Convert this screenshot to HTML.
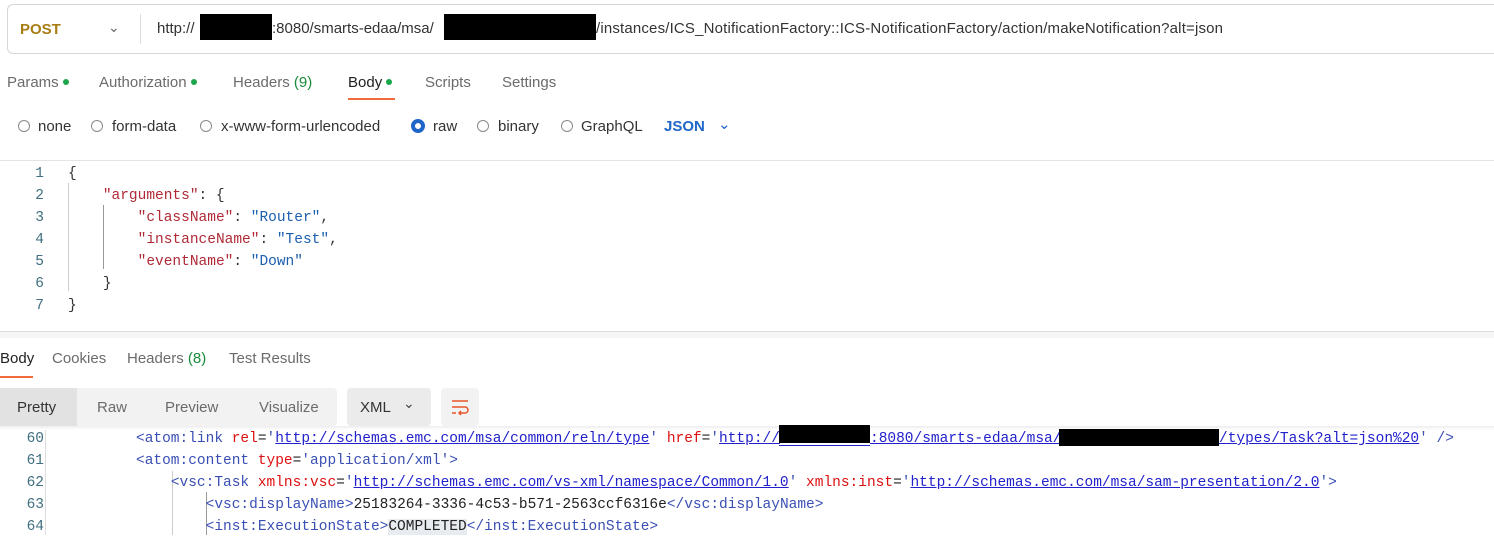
<!DOCTYPE html>
<html><head><meta charset="utf-8"><style>
body{margin:0;width:1494px;height:535px;overflow:hidden;background:#fff;font-family:"Liberation Sans",sans-serif;position:relative;color:#212121}
.a{position:absolute;white-space:nowrap}
.mono{font-family:"Liberation Mono",monospace;font-size:14.5px}
.blk{position:absolute;background:#000}
.tab{font-size:15px;color:#6b6b6b}
.dot{display:inline-block;width:6px;height:6px;border-radius:50%;background:#1aa64a;margin-left:4px;vertical-align:2px}
.rad{position:absolute;width:12px;height:12px;border:1px solid #888;border-radius:50%;box-sizing:border-box}
.rt{position:absolute;font-size:15px;color:#333;white-space:nowrap}
.ln{color:#3f6f80;font-family:"Liberation Mono",monospace;font-size:14.5px;text-align:right;width:44px}
.k{color:#b02a37}.s{color:#1b5fae}.p{color:#333}
.t{color:#3a4fb4}.at{color:#d11}.u{color:#2222cc;text-decoration:underline}
.url{position:absolute;top:20px;font-size:15px;color:#333;white-space:nowrap}
</style></head><body>
<div class="a" style="left:7px;top:4px;width:1500px;height:48px;border:1px solid #d6d6d6;border-radius:6px"></div>
<div class="a" style="left:20px;top:21px;font-size:15px;font-weight:bold;color:#a87d14">POST</div>
<div class="a" style="left:108px;top:19px;font-size:14px;color:#666">&#8964;</div>
<div class="a" style="left:140px;top:14px;width:1px;height:30px;background:#ddd"></div>
<div class="url" style="left:157px">http://</div>
<div class="url" style="left:272px">:8080/smarts-edaa/msa/</div>
<div class="url" style="left:596px;letter-spacing:0.17px">/instances/ICS_NotificationFactory::ICS-NotificationFactory/action/makeNotification?alt=json</div>
<div class="blk" style="left:200px;top:14px;width:72px;height:26px"></div>
<div class="blk" style="left:444px;top:14px;width:152px;height:26px"></div>

<div class="a tab" style="left:7px;top:74px">Params<span class="dot"></span></div>
<div class="a tab" style="left:99px;top:74px">Authorization<span class="dot"></span></div>
<div class="a tab" style="left:233px;top:74px">Headers <span style="color:#1a8a3a">(9)</span></div>
<div class="a tab" style="left:348px;top:74px;color:#222">Body<span class="dot"></span></div>
<div class="a" style="left:348px;top:98px;width:47px;height:2px;background:#f26b3a"></div>
<div class="a tab" style="left:425px;top:74px">Scripts</div>
<div class="a tab" style="left:502px;top:74px">Settings</div>

<div class="rad" style="left:18px;top:120px"></div><div class="rt" style="left:38px;top:118px">none</div>
<div class="rad" style="left:91px;top:120px"></div><div class="rt" style="left:112px;top:118px">form-data</div>
<div class="rad" style="left:200px;top:120px"></div><div class="rt" style="left:221px;top:118px">x-www-form-urlencoded</div>
<div class="rad" style="left:411px;top:119px;width:14px;height:14px;border:4px solid #1f66c8"></div><div class="rt" style="left:433px;top:118px">raw</div>
<div class="rad" style="left:477px;top:120px"></div><div class="rt" style="left:498px;top:118px">binary</div>
<div class="rad" style="left:561px;top:120px"></div><div class="rt" style="left:581px;top:118px">GraphQL</div>
<div class="rt" style="left:664px;top:118px;color:#1f66c8;font-weight:bold">JSON</div>
<div class="rt" style="left:718px;top:115px;color:#1f66c8">&#8964;</div>

<div class="a" style="left:0;top:160px;width:1494px;height:1px;background:#e4e4e4"></div>
<div class="a" style="left:68px;top:183px;width:1px;height:108px;background:#ccc"></div>
<div class="a" style="left:103px;top:205px;width:1px;height:64px;background:#999"></div>
<div class="a ln" style="left:0;top:163px;line-height:22px">1<br>2<br>3<br>4<br>5<br>6<br>7</div>
<div class="a mono" style="left:68px;top:163px;line-height:22px"><span class="p">{</span><br>&nbsp;&nbsp;&nbsp;&nbsp;<span class="k">"arguments"</span><span class="p">: {</span><br>&nbsp;&nbsp;&nbsp;&nbsp;&nbsp;&nbsp;&nbsp;&nbsp;<span class="k">"className"</span><span class="p">: </span><span class="s">"Router"</span><span class="p">,</span><br>&nbsp;&nbsp;&nbsp;&nbsp;&nbsp;&nbsp;&nbsp;&nbsp;<span class="k">"instanceName"</span><span class="p">: </span><span class="s">"Test"</span><span class="p">,</span><br>&nbsp;&nbsp;&nbsp;&nbsp;&nbsp;&nbsp;&nbsp;&nbsp;<span class="k">"eventName"</span><span class="p">: </span><span class="s">"Down"</span><br>&nbsp;&nbsp;&nbsp;&nbsp;<span class="p">}</span><br><span class="p">}</span></div>

<div class="a" style="left:0;top:331px;width:1494px;height:1px;background:#ddd"></div>
<div class="a" style="left:0;top:332px;width:1494px;height:6px;background:#f5f5f5"></div>
<div class="a tab" style="left:0;top:350px;color:#222">Body</div>
<div class="a" style="left:0;top:376px;width:33px;height:2px;background:#f26b3a"></div>
<div class="a tab" style="left:52px;top:350px">Cookies</div>
<div class="a tab" style="left:127px;top:350px">Headers <span style="color:#1a8a3a">(8)</span></div>
<div class="a tab" style="left:229px;top:350px">Test Results</div>

<div class="a" style="left:0;top:388px;width:337px;height:38px;background:#f2f2f2;border-radius:4px"></div>
<div class="a" style="left:0;top:388px;width:77px;height:38px;background:#e2e2e2"></div>
<div class="a tab" style="left:17px;top:399px;color:#333">Pretty</div>
<div class="a tab" style="left:97px;top:399px">Raw</div>
<div class="a tab" style="left:165px;top:399px">Preview</div>
<div class="a tab" style="left:259px;top:399px">Visualize</div>
<div class="a" style="left:347px;top:388px;width:84px;height:38px;background:#ebebeb;border-radius:4px"></div>
<div class="a tab" style="left:360px;top:399px;color:#333">XML</div>
<div class="a" style="left:403px;top:395px;font-size:14px;color:#444">&#8964;</div>
<div class="a" style="left:441px;top:388px;width:38px;height:38px;background:#f2f2f2;border-radius:4px"></div>
<svg class="a" style="left:450px;top:397px" width="20" height="20" viewBox="0 0 20 20" fill="none" stroke="#e8552a" stroke-width="1.5"><path d="M2 4h16M2 10h13a3 3 0 0 1 0 6h-5M2 16h4M11 14l-2 2 2 2"/></svg>
<div class="a" style="left:0;top:426px;width:1494px;height:4px;background:linear-gradient(#eee,#fff)"></div>

<div class="a" style="left:45px;top:430px;width:1px;height:105px;background:#ddd"></div>
<div class="a" style="left:172px;top:471px;width:1px;height:64px;background:#ccc"></div>
<div class="a" style="left:206px;top:492px;width:1px;height:43px;background:#999"></div>
<div class="a ln" style="left:0;top:428px;line-height:22px">60<br>61<br>62<br>63<br>64</div>
<div class="a mono" style="left:136px;top:428px;line-height:22px"><span class="t">&lt;atom:link </span><span class="at">rel</span>=<span class="t">'</span><span class="u">http://schemas.emc.com/msa/common/reln/type</span><span class="t">'</span> <span class="at">href</span>=<span class="t">'</span><span class="u">http://</span><br><span class="t">&lt;atom:content </span><span class="at">type</span>=<span class="t">'application/xml'&gt;</span><br>&nbsp;&nbsp;&nbsp;&nbsp;<span class="t">&lt;vsc:Task </span><span class="at">xmlns:vsc</span>=<span class="t">'</span><span class="u">http://schemas.emc.com/vs-xml/namespace/Common/1.0</span><span class="t">'</span> <span class="at">xmlns:inst</span>=<span class="t">'</span><span class="u">http://schemas.emc.com/msa/sam-presentation/2.0</span><span class="t">'&gt;</span><br>&nbsp;&nbsp;&nbsp;&nbsp;&nbsp;&nbsp;&nbsp;&nbsp;<span class="t">&lt;vsc:displayName&gt;</span>25183264-3336-4c53-b571-2563ccf6316e<span class="t">&lt;/vsc:displayName&gt;</span><br>&nbsp;&nbsp;&nbsp;&nbsp;&nbsp;&nbsp;&nbsp;&nbsp;<span class="t">&lt;inst:ExecutionState&gt;</span><span style="background:#e8ecf0">COMPLETED</span><span class="t">&lt;/inst:ExecutionState&gt;</span></div>
<div class="a mono" style="left:870px;top:428px;line-height:22px"><span class="u">:8080/smarts-edaa/msa/</span></div>
<div class="a mono" style="left:1219px;top:428px;line-height:22px"><span class="u">/types/Task?alt=json%20</span><span class="t">' /&gt;</span></div>
<div class="a" style="left:779px;top:445px;width:91px;height:1px;background:#2222cc"></div>
<div class="blk" style="left:779px;top:425px;width:91px;height:18px"></div>
<div class="blk" style="left:1059px;top:429px;width:160px;height:17px"></div>
</body></html>
